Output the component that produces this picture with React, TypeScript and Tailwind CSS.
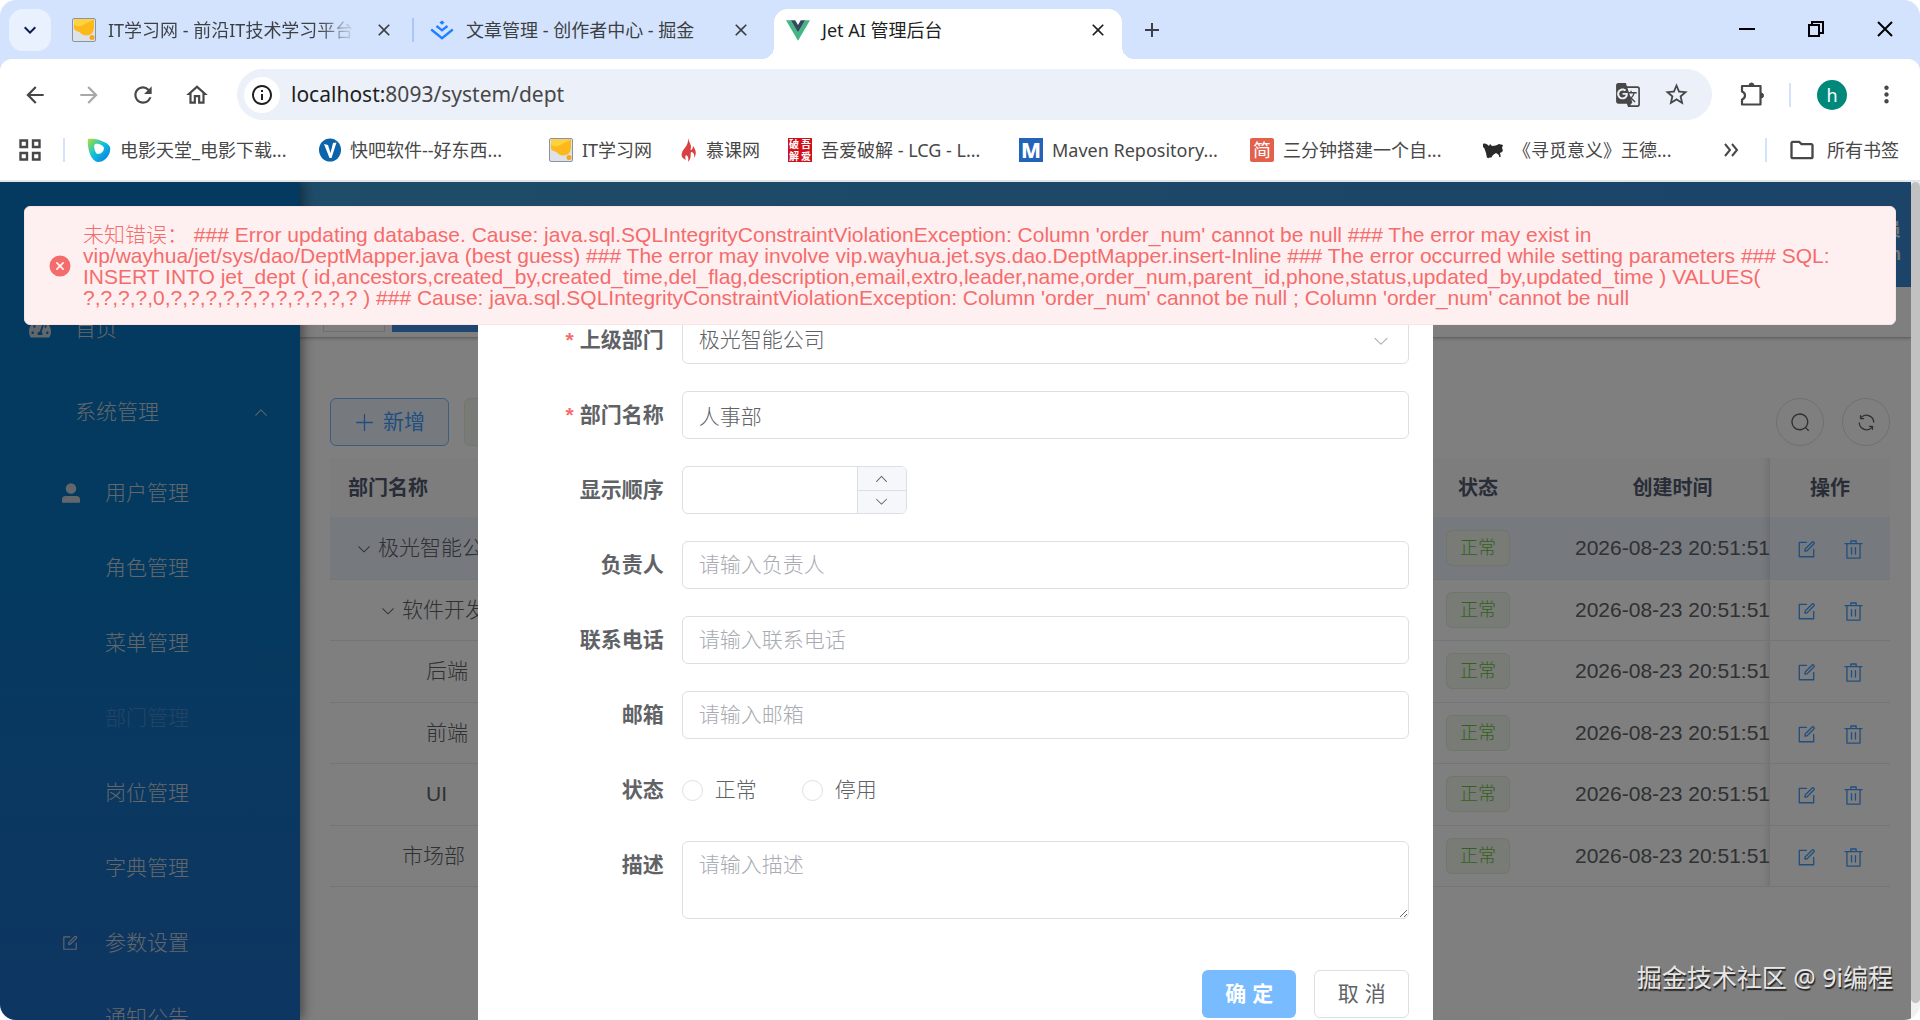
import type { ReactNode } from "react"
import { FaTachometerAlt } from "react-icons/fa"
import {
  MdAdd,
  MdArrowBack,
  MdArrowForward,
  MdClose,
  MdExpandMore,
  MdGTranslate,
  MdInfoOutline,
  MdMoreVert,
  MdOutlineFolder,
  MdOutlineHome,
  MdRefresh,
  MdStarBorder,
} from "react-icons/md"

const icons = {
  edit: "M832 512a32 32 0 1 1 64 0v352a32 32 0 0 1-32 32H160a32 32 0 0 1-32-32V160a32 32 0 0 1 32-32h352a32 32 0 0 1 0 64H192v640h640z m-362.048 42.24 52.8-7.552L847.104 222.4a32 32 0 1 0-45.248-45.248L477.44 501.44l-7.552 52.8zm422.4-422.4a96 96 0 0 1 0 135.808l-331.84 331.84a32 32 0 0 1-18.112 9.088L436.8 623.68a32 32 0 0 1-36.224-36.224l15.104-105.6a32 32 0 0 1 9.024-18.112l331.904-331.84a96 96 0 0 1 135.744 0z",
  trash:
    "M160 256H96a32 32 0 0 1 0-64h256V95.936a32 32 0 0 1 32-32h256a32 32 0 0 1 32 32V192h256a32 32 0 1 1 0 64h-64v672a32 32 0 0 1-32 32H192a32 32 0 0 1-32-32zm448-64v-64H416v64zM224 896h576V256H224zm192-128a32 32 0 0 1-32-32V416a32 32 0 0 1 64 0v320a32 32 0 0 1-32 32m192 0a32 32 0 0 1-32-32V416a32 32 0 0 1 64 0v320a32 32 0 0 1-32 32",
  search:
    "m795.904 750.72 124.992 124.928a32 32 0 0 1-45.248 45.248L750.656 795.904a416 416 0 1 1 45.248-45.248zM480 832a352 352 0 1 0 0-704 352 352 0 0 0 0 704",
  refresh:
    "M771.776 794.88A384 384 0 0 1 128 512h64a320 320 0 0 0 555.712 216.448H654.72a32 32 0 1 1 0-64h149.056a32 32 0 0 1 32 32v148.928a32 32 0 1 1-64 0v-50.56zM276.288 295.616h92.992a32 32 0 0 1 0 64H220.16a32 32 0 0 1-32-32V178.56a32 32 0 0 1 64 0v50.56A384 384 0 0 1 896.128 512h-64a320 320 0 0 0-555.776-216.384z",
  down: "M831.872 340.864 512 652.672 192.128 340.864a30.592 30.592 0 0 0-42.752 0 29.12 29.12 0 0 0 0 41.6L489.664 714.24a32 32 0 0 0 44.672 0l340.288-331.712a29.12 29.12 0 0 0 0-41.728 30.592 30.592 0 0 0-42.752 0z",
  up: "m488.832 344.32-339.84 356.672a32 32 0 0 0 0 44.16l.384.384a29.44 29.44 0 0 0 42.688 0l320-335.872 319.872 335.872a29.44 29.44 0 0 0 42.688 0l.384-.384a32 32 0 0 0 0-44.16L535.168 344.32a32 32 0 0 0-46.336 0",
  plus: "M480 480V128a32 32 0 0 1 64 0v352h352a32 32 0 1 1 0 64H544v352a32 32 0 1 1-64 0V544H128a32 32 0 0 1 0-64z",
  error:
    "M512 64a448 448 0 1 1 0 896 448 448 0 0 1 0-896m0 393.664L407.936 353.6a38.4 38.4 0 1 0-54.336 54.336L457.664 512 353.6 616.064a38.4 38.4 0 1 0 54.336 54.336L512 566.336 616.064 670.4a38.4 38.4 0 1 0 54.336-54.336L566.336 512 670.4 407.936a38.4 38.4 0 1 0-54.336-54.336z",
  user: "M288 320a224 224 0 1 0 448 0 224 224 0 1 0-448 0m544 608H160a32 32 0 0 1-32-32v-96a160 160 0 0 1 160-160h448a160 160 0 0 1 160 160v96a32 32 0 0 1-32 32z",
}

const Icon = ({ name, className }: { name: keyof typeof icons; className: string }) => (
  <svg viewBox="0 0 1024 1024" fill="currentColor" className={className} aria-hidden="true">
    <path d={icons[name]} />
  </svg>
)

const NoteLogo = () => (
  <svg viewBox="0 0 24 24" className="size-6 shrink-0">
    <rect x="0.5" y="0.5" width="23" height="23" rx="1.5" fill="#dde1ea" stroke="#8c93a0" />
    <path d="M2 1.500h20v8c0 5-3 8-8 8-4 0-5-3-8-4-2-1-4-1-4-4z" fill="#fdb91a" />
    <path d="M2 1.500h20L9 8c-3 1-6 0-7-2z" fill="#fed23c" />
    <circle cx="20" cy="19.500" r="2.500" fill="#f5a81c" />
  </svg>
)

const JuejinLogo = () => (
  <svg viewBox="0 0 24 24" className="size-6 shrink-0" fill="none" stroke="#1e80ff" strokeWidth="2.300">
    <path d="M12 2.500l2.600 2.100L12 6.700 9.400 4.600z" fill="#1e80ff" stroke="none" />
    <path d="M6.500 8l5.500 4.400L17.500 8" />
    <path d="M1.200 11.500L12 20.200l10.800-8.700" />
  </svg>
)

const VueLogo = () => (
  <svg viewBox="0 0 256 221" className="h-[21px] w-6 shrink-0">
    <path fill="#41b883" d="M0 0l128 220.800L256 0h-51.200L128 132.480 50.560 0z" />
    <path fill="#35495e" d="M50.560 0L128 133.120 204.800 0h-47.360L128 51.200 97.920 0z" />
  </svg>
)

const MovieLogo = () => (
  <svg viewBox="0 0 24 24" className="size-6 shrink-0">
    <defs>
      <linearGradient id="movie" x1="0" y1="0" x2="1" y2="1">
        <stop offset="0" stopColor="#b4e02c" />
        <stop offset=".45" stopColor="#12c3d8" />
        <stop offset="1" stopColor="#0872e8" />
      </linearGradient>
    </defs>
    <path d="M1 1c5-1 11 0 16 3 5 2 7 5 6 9-1 6-6 11-12 11C4 23 0 11 1 1z" fill="url(#movie)" />
    <path d="M8 6c3-1 8 1 9 4 0 3-3 6-6 6s-5-8-3-10z" fill="#fff" />
  </svg>
)

const KuaibaLogo = () => (
  <svg viewBox="0 0 22 24" className="h-6 w-[22px] shrink-0">
    <ellipse cx="11" cy="12" rx="11" ry="11.500" fill="#0b63a9" />
    <path d="M5 6l4 1 2.500 8L14 5l3.500-.5L12.500 20h-2z" fill="#fff" />
  </svg>
)

const FlameLogo = () => (
  <svg viewBox="0 0 16 24" className="h-6 w-4 shrink-0">
    <path
      d="M7 0c1 4 3 6 3 9 0 1-1 3 0 3s2-2 2-4c3 4 4 8 1 12 1-4-1-6-3-6-1 3 1 6-3 10 1-4 0-6-2-7-1 2-1 3 0 5C1 20 0 18 1 15c1-5 7-7 6-15z"
      fill="#dc3f42"
    />
  </svg>
)

const BirdLogo = () => (
  <svg viewBox="0 0 22 24" className="h-6 w-[22px] shrink-0">
    <path d="M1 6c2-1 4 0 6 2l1-2 2 2c3 0 5-1 7-2l4 1-1 3c1 2 1 3 0 4l-2 1-1 2-3-2-3 2-2 3-1-1-3 1-1-5C3 13 3 10 1 9z" fill="#2a2a2a" />
    <path d="M17 14l1 5M6 17l1 3" stroke="#2a2a2a" strokeWidth="1.500" />
  </svg>
)

const PojieLogo = () => (
  <span className="grid size-6 shrink-0 grid-cols-2 place-items-center bg-[#d0111b] text-[10px] leading-3 font-bold text-white">
    <span>破</span>
    <span>吾</span>
    <span>解</span>
    <span>爱</span>
  </span>
)

const MavenLogo = () => (
  <span className="flex size-6 shrink-0 items-center justify-center bg-[#2364b9] text-[21px] leading-6 font-extrabold text-white">M</span>
)

const JianLogo = () => (
  <span className="flex size-6 shrink-0 items-center justify-center rounded-xs bg-[#e2604c] text-lg leading-6 text-white">简</span>
)

const bookmarks: { label: string; logo: ReactNode; width: string }[] = [
  { label: "电影天堂_电影下载...", logo: <MovieLogo />, width: "w-[232px]" },
  { label: "快吧软件--好东西...", logo: <KuaibaLogo />, width: "w-[230px]" },
  { label: "IT学习网", logo: <NoteLogo />, width: "w-[132px]" },
  { label: "慕课网", logo: <FlameLogo />, width: "w-[107px]" },
  { label: "吾爱破解 - LCG - L...", logo: <PojieLogo />, width: "w-[231px]" },
  { label: "Maven Repository...", logo: <MavenLogo />, width: "w-[231px]" },
  { label: "三分钟搭建一个自...", logo: <JianLogo />, width: "w-[232px]" },
  { label: "《寻觅意义》王德...", logo: <BirdLogo />, width: "w-[210px]" },
]

const TabStrip = () => (
  <div className="flex h-[59px] items-end bg-[#d4e3fd] pl-[9px] text-lg text-[#3c4043]">
    <button aria-label="搜索标签页" className="mb-2 flex size-[42px] items-center justify-center rounded-[14px] bg-[#e9f1fe] text-[#0b1d51]">
      <MdExpandMore className="size-6 stroke-current" />
    </button>
    <div className="flex h-[50px] w-[361px] items-center pb-2 pl-[21px]">
      <NoteLogo />
      <span className="ml-3 w-[248px] overflow-hidden bg-linear-to-r from-[#3c4043] from-85% to-transparent bg-clip-text whitespace-nowrap text-transparent">
        IT学习网 - 前沿IT技术学习平台
      </span>
      <button aria-label="关闭" className="ml-[18px]">
        <MdClose className="size-5" />
      </button>
    </div>
    <div className="mb-[17px] h-6 w-0.5 bg-[#a9c7fa]" />
    <div className="flex h-[50px] w-[360px] items-center pb-2 pl-4">
      <JuejinLogo />
      <span className="ml-3 flex-1 whitespace-nowrap">文章管理 - 创作者中心 - 掘金</span>
      <button aria-label="关闭" className="mr-[23px]">
        <MdClose className="size-5" />
      </button>
    </div>
    <div className="relative flex h-[50px] w-[348px] items-center rounded-t-[14px] bg-white pb-2 pl-3 text-[#1f1f1f]">
      <span className="absolute bottom-0 -left-3 size-3 bg-[radial-gradient(circle_at_0_0,transparent_12px,#fff_12px)]" />
      <span className="absolute -right-3 bottom-0 size-3 bg-[radial-gradient(circle_at_100%_0,transparent_12px,#fff_12px)]" />
      <VueLogo />
      <span className="ml-3 flex-1">Jet AI 管理后台</span>
      <button aria-label="关闭" className="mr-[14px]">
        <MdClose className="size-5" />
      </button>
    </div>
    <button aria-label="新标签页" className="mb-[17px] ml-[18px]">
      <MdAdd className="size-6" />
    </button>
    <div className="mb-5 ml-auto flex gap-[49px] pr-[25px] text-black">
      <button aria-label="最小化">
        <svg viewBox="0 0 20 20" className="size-5" stroke="currentColor" strokeWidth="2">
          <path d="M2 10h16" />
        </svg>
      </button>
      <button aria-label="还原">
        <svg viewBox="0 0 20 20" className="size-5" fill="none" stroke="currentColor" strokeWidth="2">
          <path d="M3 6h10v11H3zM6 6V3h11v11h-3" />
        </svg>
      </button>
      <button aria-label="关闭窗口">
        <svg viewBox="0 0 20 20" className="size-5" stroke="currentColor" strokeWidth="2">
          <path d="M3 3l14 14M17 3L3 17" />
        </svg>
      </button>
    </div>
  </div>
)

const AddressBar = () => (
  <div className="bg-[#d4e3fd]">
    <div className="flex h-[61px] items-center rounded-t-xl bg-white pt-[10px] pr-5 pl-[22px] text-[#474747]">
      <div className="flex w-[215px] gap-7">
        <button aria-label="后退">
          <MdArrowBack className="size-[26px]" />
        </button>
        <button aria-label="前进" className="text-[#a8a8a8]">
          <MdArrowForward className="size-[26px]" />
        </button>
        <button aria-label="重新加载">
          <MdRefresh className="size-[26px]" />
        </button>
        <button aria-label="主页">
          <MdOutlineHome className="size-[26px]" />
        </button>
      </div>
      <div className="flex h-[51px] flex-1 items-center rounded-full bg-[#ebf0f9] pr-[22px] pl-[7px]">
        <span className="flex size-9 items-center justify-center rounded-full bg-white text-[#1f1f1f]">
          <MdInfoOutline className="size-6" />
        </span>
        <p className="ml-[11px] flex-1 text-[21px] text-[#474747]">
          <span className="text-[#1f1f1f]">localhost:</span>8093/system/dept
        </p>
        <button aria-label="翻译">
          <MdGTranslate className="size-[26px]" />
        </button>
        <button aria-label="添加书签" className="ml-[22px]">
          <MdStarBorder className="size-[27px]" />
        </button>
      </div>
      <button aria-label="扩展程序" className="ml-[26px]">
        <svg viewBox="0 0 27 27" className="size-[27px]" fill="none" stroke="currentColor" strokeWidth="2.200" strokeLinejoin="round">
          <path d="M4 5h18.500v18.500H4v-5c4-1.500 4-6.500 0-8z" />
          <path d="M11 4.500a2.500 2.500 0 0 1 5 0zM23 12a2.500 2.500 0 0 1 0 5z" fill="currentColor" strokeWidth="1" />
        </svg>
      </button>
      <span className="ml-6 h-6 w-0.5 bg-[#d3e3fd]" />
      <button className="ml-[26px] size-[30px] rounded-full bg-[#00897b] text-lg leading-6 text-white">h</button>
      <button aria-label="更多" className="ml-[26px]">
        <MdMoreVert className="size-[27px]" />
      </button>
    </div>
  </div>
)

const BookmarksBar = () => (
  <div className="flex h-[62px] items-center border-b-2 border-[#e2e5e7] pr-[21px] pl-[19px] text-lg text-[#474747]">
    <svg viewBox="0 0 22 22" className="size-[22px]" fill="none" stroke="currentColor" strokeWidth="2.400">
      <path d="M1.500 1.500h6.500v6.500H1.500zM14 1.500h6.500v6.500H14zM1.500 14h6.500v6.500H1.500zM14 14h6.500v6.500H14z" />
    </svg>
    <span className="mr-[22px] ml-[22px] h-6 w-0.5 bg-[#d3e3fd]" />
    <nav className="flex flex-1">
      {bookmarks.map((b) => (
        <a key={b.label} href="#" className={`flex items-center gap-[9px] whitespace-nowrap ${b.width}`}>
          {b.logo}
          {b.label}
        </a>
      ))}
    </nav>
    <svg viewBox="0 0 16 16" className="size-4" fill="none" stroke="currentColor" strokeWidth="2">
      <path d="M2 2l5 6-5 6M9 2l5 6-5 6" />
    </svg>
    <span className="ml-[26px] h-6 w-0.5 bg-[#d3e3fd]" />
    <a href="#" className="ml-[21px] flex items-center gap-[11px]">
      <MdOutlineFolder className="size-7" />
      所有书签
    </a>
  </div>
)

const menu = [
  { label: "用户管理", icon: "user" },
  { label: "角色管理" },
  { label: "菜单管理" },
  { label: "部门管理", active: true },
  { label: "岗位管理" },
  { label: "字典管理" },
  { label: "参数设置", icon: "edit" },
  { label: "通知公告" },
]

const Sidebar = () => (
  <aside className="z-10 w-[300px] shrink-0 overflow-hidden bg-linear-to-b from-[#0874be] from-45% to-[#1c6cc4] pt-[108px] text-[21px] text-[#c6cfd6] shadow-[2px_0_12px_rgba(0,0,0,.5)]">
    <a href="#" className="flex h-[78px] items-center pl-[29px]">
      <FaTachometerAlt className="size-[22px]" />
      <span className="ml-6">首页</span>
    </a>
    <button className="flex h-[87px] w-full items-center pr-[31px] pl-[75px]">
      系统管理
      <Icon name="up" className="ml-auto size-4" />
    </button>
    {menu.map((m) => (
      <a key={m.label} href="#" className={`flex h-[75px] items-center pl-[59px] ${m.active ? "text-[#4689c8]" : ""}`}>
        <span className="flex w-[46px]">
          {m.icon === "user" && <Icon name="user" className="size-6" />}
          {m.icon === "edit" && <Icon name="edit" className="ml-0.5 size-[18px]" />}
        </span>
        {m.label}
      </a>
    ))}
  </aside>
)

const rows = [
  { name: "极光智能公司", pad: "pl-[18px]", open: true },
  { name: "软件开发部", pad: "pl-[42px]", open: true },
  { name: "后端", pad: "pl-24" },
  { name: "前端", pad: "pl-24" },
  { name: "UI", pad: "pl-24" },
  { name: "市场部", pad: "pl-[72px]" },
]

const DeptTable = () => (
  <table className="mt-3 w-full table-fixed text-[21px] text-[#606266]">
    <colgroup>
      <col />
      <col className="w-[184px]" />
      <col className="w-[199px]" />
      <col className="w-[120px]" />
    </colgroup>
    <thead>
      <tr className="h-[59px] bg-[#fbfbfb] text-xl text-[#515a6e]">
        <th className="pl-[18px] text-left">部门名称</th>
        <th className="pr-0.5">状态</th>
        <th className="pl-1 shadow-[inset_-10px_0_10px_-10px_rgba(0,0,0,.2)]">创建时间</th>
        <th>操作</th>
      </tr>
    </thead>
    <tbody>
      {rows.map((r) => (
        <tr key={r.name} className="h-[61px] border-b border-[#e9ebf0] odd:h-[62px] first:bg-[#ecf2fc]">
          <td className={`whitespace-nowrap ${r.pad}`}>
            {r.open && <Icon name="down" className="mr-[6px] ml-2 inline size-4" />}
            {r.name}
          </td>
          <td className="pr-0.5 text-center">
            <span className="inline-flex h-9 w-16 items-center justify-center rounded-md border border-[#deedd8] bg-[#f0f6ec] align-middle text-lg text-[#67c23a]">
              正常
            </span>
          </td>
          <td className="pl-1 whitespace-nowrap shadow-[inset_-10px_0_10px_-10px_rgba(0,0,0,.2)]">2026-08-23 20:51:51</td>
          <td>
            <div className="flex justify-center gap-[26px] pt-[3px] text-[#409eff]">
              <button aria-label="编辑">
                <Icon name="edit" className="size-[21px]" />
              </button>
              <button aria-label="删除">
                <Icon name="trash" className="size-[21px]" />
              </button>
            </div>
          </td>
        </tr>
      ))}
    </tbody>
  </table>
)

const Main = () => (
  <main className="min-w-0 flex-1 bg-white">
    <header className="flex h-[105px] items-start justify-end bg-linear-to-r from-[#3e98d0] to-[#3688d0] pt-9 pr-[10px]">
      <p className="text-right text-lg leading-6 font-bold text-[#e8e8e8]">
        管理员
        <br />
        admin
      </p>
    </header>
    <div className="flex h-[51px] gap-[7px] border-b border-[#c8c9cc] pt-[6px] pl-[23px] shadow-[0_1px_3px_rgba(0,0,0,.2)]">
      <span className="h-[39px] w-[62px] border border-[#d8dce5]" />
      <span className="h-[39px] w-[110px] bg-[#3e8de0]" />
    </div>
    <div className="pt-[60px] pr-[21px] pl-[30px]">
      <div className="flex items-center">
        <button className="flex h-12 w-[119px] items-center justify-center gap-2 rounded-md border border-[#79bbff] bg-[#ecf5ff] text-[21px] font-normal text-[#409eff]">
          <Icon name="plus" className="size-[21px]" />
          新增
        </button>
        <span className="ml-[15px] h-12 w-[120px] rounded-md border border-[#e4ecdf] bg-[#f2f6ee]" />
        <button aria-label="搜索" className="ml-auto flex size-12 items-center justify-center rounded-full border border-[#dcdfe6] text-[#606266]">
          <Icon name="search" className="size-[21px]" />
        </button>
        <button aria-label="刷新" className="ml-[18px] flex size-12 items-center justify-center rounded-full border border-[#dcdfe6] text-[#606266]">
          <Icon name="refresh" className="size-[21px]" />
        </button>
      </div>
      <DeptTable />
    </div>
  </main>
)

const box = "w-full rounded-md border border-[#dcdfe6] px-4 placeholder:text-[#a8abb2]"

const Field = ({ label, id, required, children }: { label: string; id?: string; required?: boolean; children: ReactNode }) => (
  <div className="flex">
    <label htmlFor={id} className="w-[180px] shrink-0 pr-[18px] text-right leading-[48px] font-bold">
      {required && <span className="mr-[6px] text-[#f56c6c]">*</span>}
      {label}
    </label>
    <div className="flex min-h-12 flex-1 items-center">{children}</div>
  </div>
)

const DeptDialog = () => (
  <div role="dialog" aria-label="添加部门" className="mt-10 w-1/2 bg-white px-6 pt-[94px] pb-6 text-[21px] text-[#606266]">
    <form className="flex flex-col gap-[27px]">
      <Field label="上级部门" id="parent" required>
        <div className="relative w-full">
          <select id="parent" className={`${box} h-12 appearance-none`}>
            <option>极光智能公司</option>
          </select>
          <Icon name="down" className="pointer-events-none absolute top-4 right-[19px] size-[18px] text-[#a8abb2]" />
        </div>
      </Field>
      <Field label="部门名称" id="name" required>
        <input id="name" defaultValue="人事部" className={`${box} h-12`} />
      </Field>
      <Field label="显示顺序" id="order">
        <div className="flex h-12 w-[225px] overflow-hidden rounded-md border border-[#dcdfe6]">
          <input id="order" className="min-w-0 flex-1 px-4" />
          <div className="flex w-[49px] flex-col border-l border-[#dcdfe6] bg-[#f5f7fa]">
            <button type="button" aria-label="增加" className="flex flex-1 items-center justify-center border-b border-[#dcdfe6]">
              <Icon name="up" className="size-[15px]" />
            </button>
            <button type="button" aria-label="减少" className="flex flex-1 items-center justify-center">
              <Icon name="down" className="size-[15px]" />
            </button>
          </div>
        </div>
      </Field>
      <Field label="负责人" id="leader">
        <input id="leader" placeholder="请输入负责人" className={`${box} h-12`} />
      </Field>
      <Field label="联系电话" id="phone">
        <input id="phone" placeholder="请输入联系电话" className={`${box} h-12`} />
      </Field>
      <Field label="邮箱" id="email">
        <input id="email" placeholder="请输入邮箱" className={`${box} h-12`} />
      </Field>
      <Field label="状态">
        <label className="flex w-[120px] items-center gap-3">
          <input type="radio" name="status" className="size-[21px] appearance-none rounded-full border border-[#dcdfe6]" />
          正常
        </label>
        <label className="flex items-center gap-3">
          <input type="radio" name="status" className="size-[21px] appearance-none rounded-full border border-[#dcdfe6]" />
          停用
        </label>
      </Field>
      <Field label="描述" id="desc">
        <textarea id="desc" placeholder="请输入描述" className={`${box} block h-[78px] py-[7px] leading-8`} />
      </Field>
      <div className="mt-6 flex justify-end gap-[18px]">
        <button type="button" className="h-12 w-[94px] rounded-md bg-[#79bbff] font-bold text-white">
          确 定
        </button>
        <button type="button" className="h-12 w-[95px] rounded-md border border-[#dcdfe6] font-normal">
          取 消
        </button>
      </div>
    </form>
  </div>
)

const ErrorMessage = () => (
  <div role="alert" className="absolute top-6 right-[15px] left-6 flex h-[119px] items-center rounded-md border border-[#fde2e2] bg-[#fef0f0] pl-[23px] text-[21px] leading-[21px] whitespace-nowrap text-[#f56c6c]">
    <Icon name="error" className="size-6 shrink-0" />
    <p className="ml-[11px]">
      未知错误： ### Error updating database. Cause: java.sql.SQLIntegrityConstraintViolationException: Column 'order_num' cannot be null ### The error may exist in
      <br />
      vip/wayhua/jet/sys/dao/DeptMapper.java (best guess) ### The error may involve vip.wayhua.jet.sys.dao.DeptMapper.insert-Inline ### The error occurred while setting parameters ### SQL:
      <br />
      INSERT INTO jet_dept ( id,ancestors,created_by,created_time,del_flag,description,email,extro,leader,name,order_num,parent_id,phone,status,updated_by,updated_time ) VALUES(
      <br />
      ?,?,?,?,0,?,?,?,?,?,?,?,?,?,?,? ) ### Cause: java.sql.SQLIntegrityConstraintViolationException: Column 'order_num' cannot be null ; Column 'order_num' cannot be null
    </p>
  </div>
)

export default function App() {
  return (
    <div className="h-screen bg-white">
      <div className="flex h-full flex-col overflow-hidden rounded-2xl bg-white font-['Noto_Sans','Noto_Sans_CJK_SC',sans-serif]">
        <div className="shrink-0">
          <TabStrip />
          <AddressBar />
          <BookmarksBar />
        </div>
        <div className="flex min-h-0 flex-1 font-['Liberation_Sans','Noto_Sans_CJK_SC',sans-serif] font-light">
          <div className="relative flex min-w-0 flex-1 overflow-hidden">
            <Sidebar />
            <Main />
            <div className="absolute inset-0 z-20 flex items-start justify-center overflow-hidden bg-black/50">
              <DeptDialog />
            </div>
            <div className="absolute inset-0 z-30">
              <ErrorMessage />
              <p className="absolute right-[18px] bottom-6 font-['Noto_Sans','Noto_Sans_CJK_SC',sans-serif] text-[25px] font-normal text-[#e6e6e6] [text-shadow:1px_2px_1px_#222]">
                掘金技术社区 @ 9i编程
              </p>
            </div>
          </div>
          <div className="w-[9px] shrink-0 bg-[#f1f1f1]">
            <div className="h-[98%] rounded-full bg-[#c1c1c1]" />
          </div>
        </div>
      </div>
    </div>
  )
}
